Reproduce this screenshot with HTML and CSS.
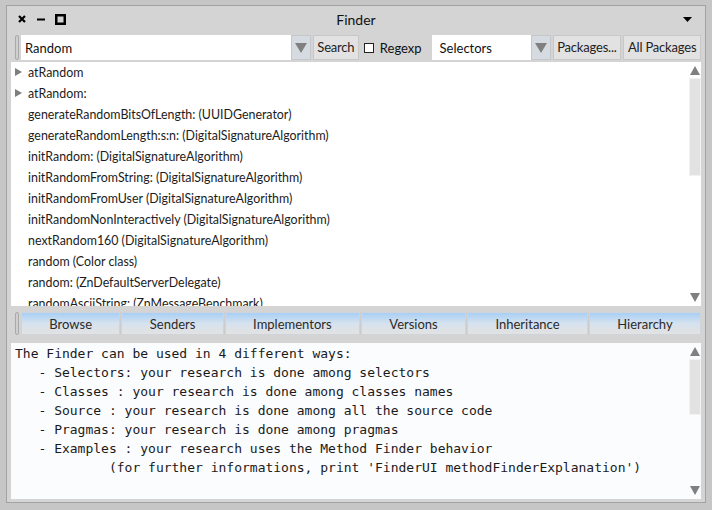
FILE: index.html
```html
<!DOCTYPE html>
<html>
<head>
<meta charset="utf-8">
<link rel="stylesheet" href="styles.css">
</head>
<body>
<div class="window">
  <div class="titlebar">
    <div class="controls">
      <svg class="ctl" width="10" height="10" viewBox="0 0 10 10"><path d="M2 2L8 8M8 2L2 8" stroke="#000" stroke-width="2.2"/></svg>
      <svg class="ctl" width="10" height="10" viewBox="0 0 10 10"><path d="M1 5.5H9" stroke="#000" stroke-width="2"/></svg>
      <svg class="ctl" width="11" height="11" viewBox="0 0 11 11"><rect x="1.25" y="1.25" width="8.5" height="8.5" fill="none" stroke="#000" stroke-width="2.5"/></svg>
    </div>
    <div class="title">Finder</div>
    <svg class="menu-arrow" width="9" height="5" viewBox="0 0 9 5"><path d="M0 0H9L4.5 5Z" fill="#000"/></svg>
  </div>

  <div class="toolbar">
    <div class="handle"></div>
    <div class="combo search-combo">
      <div class="field">Random</div>
      <div class="drop"><svg width="12" height="10" viewBox="0 0 12 10"><path d="M0 0H12L6 10Z" fill="#808080"/></svg></div>
    </div>
    <button class="btn search-btn">Search</button>
    <label class="check"><span class="box"></span>Regexp</label>
    <div class="combo mode-combo">
      <div class="field">Selectors</div>
      <div class="drop"><svg width="12" height="10" viewBox="0 0 12 10"><path d="M0 0H12L6 10Z" fill="#808080"/></svg></div>
    </div>
    <button class="btn pkg-btn">Packages...</button>
    <button class="btn all-btn">All Packages</button>
  </div>

  <div class="pane list-pane">
    <ul class="list">
      <li><span class="tri"></span>atRandom</li>
      <li><span class="tri"></span>atRandom:</li>
      <li>generateRandomBitsOfLength: (UUIDGenerator)</li>
      <li>generateRandomLength:s:n: (DigitalSignatureAlgorithm)</li>
      <li>initRandom: (DigitalSignatureAlgorithm)</li>
      <li>initRandomFromString: (DigitalSignatureAlgorithm)</li>
      <li>initRandomFromUser (DigitalSignatureAlgorithm)</li>
      <li>initRandomNonInteractively (DigitalSignatureAlgorithm)</li>
      <li>nextRandom160 (DigitalSignatureAlgorithm)</li>
      <li>random (Color class)</li>
      <li>random: (ZnDefaultServerDelegate)</li>
      <li>randomAsciiString: (ZnMessageBenchmark)</li>
    </ul>
    <div class="scrollbar">
      <svg class="arrow" width="10" height="9" viewBox="0 0 10 9"><path d="M0 9H10L5 0Z" fill="#808080"/></svg>
      <div class="track"><div class="thumb list-thumb"></div></div>
      <svg class="arrow" width="10" height="9" viewBox="0 0 10 9"><path d="M0 0H10L5 9Z" fill="#808080"/></svg>
    </div>
  </div>

  <div class="buttonbar">
    <div class="handle"></div>
    <div class="tabs">
      <button class="tab">Browse</button>
      <button class="tab">Senders</button>
      <button class="tab">Implementors</button>
      <button class="tab">Versions</button>
      <button class="tab">Inheritance</button>
      <button class="tab">Hierarchy</button>
    </div>
  </div>

  <div class="pane text-pane">
<pre class="text">The Finder can be used in 4 different ways:
   - Selectors: your research is done among selectors
   - Classes : your research is done among classes names
   - Source : your research is done among all the source code
   - Pragmas: your research is done among pragmas
   - Examples : your research uses the Method Finder behavior
            (for further informations, print 'FinderUI methodFinderExplanation')</pre>
    <div class="scrollbar">
      <svg class="arrow" width="10" height="9" viewBox="0 0 10 9"><path d="M0 9H10L5 0Z" fill="#808080"/></svg>
      <div class="track"><div class="thumb text-thumb"></div></div>
      <svg class="arrow" width="10" height="9" viewBox="0 0 10 9"><path d="M0 0H10L5 9Z" fill="#808080"/></svg>
    </div>
  </div>
</div>
</body>
</html>
```

FILE: styles.css
```css
* { box-sizing: border-box; }
html, body { margin: 0; padding: 0; }
body {
  background: #c6c6c6;
  width: 712px;
  height: 510px;
  overflow: hidden;
  font-family: Lato, "Liberation Sans", sans-serif;
  font-size: 12.4px;
  color: #222;
}
.window {
  margin: 5px 0 0 6px;
  width: 700px;
  height: 498px;
  border: 1px solid #a2a2a2;
  background: #d4d4d4;
  padding: 0 4px 3px 4px;
  display: flex;
  flex-direction: column;
}
.titlebar {
  height: 26px;
  display: flex;
  align-items: center;
  position: relative;
}
.controls {
  display: flex;
  align-items: center;
  gap: 9px;
  padding-left: 6px;
}
.ctl { display: block; }
.title {
  position: absolute;
  left: 0; right: 0;
  text-align: center;
  font-size: 14px;
  color: #111;
  pointer-events: none;
}
.menu-arrow {
  margin-left: auto;
  margin-right: 9px;
}
.toolbar {
  margin-top: 3px;
  height: 25px;
  display: flex;
  align-items: stretch;
  padding-left: 4px;
}
.handle {
  width: 4px;
  border: 1px solid #a9a9a9;
  background: #cfcfcf;
  border-radius: 2px;
  margin-right: 2px;
}
.combo {
  display: flex;
  align-items: stretch;
}
.field {
  background: #fff;
  display: flex;
  align-items: center;
  padding-left: 4px;
  color: #111;
  font-size: 13px;
}
.search-combo .field { width: 270px; }
.mode-combo { margin-left: 10px; }
.mode-combo .field { width: 99px; padding-left: 8px; }
.drop {
  width: 20px;
  background: #d6dbe1;
  border: 1px solid #c4c8cc;
  display: flex;
  align-items: center;
  justify-content: center;
}
.btn {
  font: inherit;
  font-size: 13px;
  color: #222;
  background: #e2e2e2;
  border: 1px solid #c8c8c8;
  padding: 0;
  margin-left: 2px;
  line-height: 1;
  white-space: nowrap;
  letter-spacing: -0.2px;
}
.search-btn { width: 46px; }
.pkg-btn { width: 69px; }
.all-btn { width: 78px; }
.check {
  display: flex;
  align-items: center;
  margin-left: 5px;
  color: #111;
  font-size: 13px;
}
.check .box {
  width: 10px;
  height: 10px;
  border: 1px solid #222;
  background: #fff;
  margin-right: 6px;
}
.pane {
  background: #fff;
  display: flex;
  position: relative;
}
.list-pane {
  margin-top: 2px;
  height: 244px;
  overflow: hidden;
}
.list {
  list-style: none;
  margin: 0;
  padding: 0;
  flex: 1;
  overflow: hidden;
}
.list li {
  height: 21px;
  line-height: 21px;
  padding-left: 17px;
  position: relative;
  white-space: nowrap;
  color: #1c1c1c;
}
.tri {
  position: absolute;
  left: 4px;
  top: 6px;
  width: 0; height: 0;
  border-top: 4.5px solid transparent;
  border-bottom: 4.5px solid transparent;
  border-left: 7px solid #7d7d7d;
}
.scrollbar {
  width: 12px;
  display: flex;
  flex-direction: column;
  align-items: center;
  padding: 2px 0 2px;
}
.scrollbar .arrow { display: block; flex: none; margin: 2px 0; }
.track {
  flex: 1;
  width: 12px;
  margin: 1px 0;
  position: relative;
}
.thumb {
  position: absolute;
  left: 0; right: 0;
  background: #e2e2e2;
  border: 1px solid #f2f2f2;
}
.list-thumb { top: 0; height: 98px; }
.text-thumb { top: 0; height: 56px; }
.buttonbar {
  margin-top: 6px;
  height: 23px;
  display: flex;
  padding-left: 4px;
}
.tabs {
  flex: 1;
  display: flex;
  gap: 1px;
  background: #cdcdcd;
}
.tab {
  flex: 1 1 auto;
  font: inherit;
  font-size: 13px;
  color: #2a2a2a;
  border: 1px solid #cfd4da;
  padding: 0;
  white-space: nowrap;
  background: linear-gradient(#a9cff5, #d6e2ee 50%, #e2e2e2);
}
.text-pane {
  margin-top: 8px;
  height: 156px;
  background: #fbfcfe;
}
.text {
  flex: 1;
  margin: 0;
  padding: 1px 0 0 4px;
  font-family: "DejaVu Sans Mono", monospace;
  font-size: 13px;
  line-height: 19px;
  color: #1a1a1a;
  overflow: hidden;
}
```
